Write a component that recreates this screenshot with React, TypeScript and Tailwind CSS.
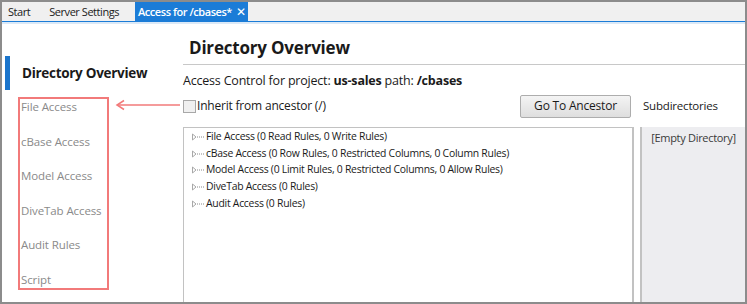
import React from "react";

const treeRows = [
  "File Access (0 Read Rules, 0 Write Rules)",
  "cBase Access (0 Row Rules, 0 Restricted Columns, 0 Column Rules)",
  "Model Access (0 Limit Rules, 0 Restricted Columns, 0 Allow Rules)",
  "DiveTab Access (0 Rules)",
  "Audit Access (0 Rules)",
];

const sideItems = ["File Access", "cBase Access", "Model Access", "DiveTab Access", "Audit Rules", "Script"];

function Expander() {
  return (
    <svg width="14" height="8" viewBox="0 0 14 8" className="shrink-0">
      <path d="M1.5 1 L5 4 L1.5 7 Z" fill="none" stroke="#a8a8a8" strokeWidth="1" />
      <path d="M6 4 H13" stroke="#8a8a8a" strokeWidth="1" strokeDasharray="1 1" />
    </svg>
  );
}

export default function App() {
  return (
    <div
      className="relative flex h-[304px] w-[747px] flex-col overflow-hidden border-2 border-[#8c8c8c] bg-white text-[#1a1a1a]"
      style={{ fontFamily: '"Open Sans", "Noto Sans", sans-serif' }}
    >
      {/* tabs */}
      <div className="flex h-[19px] shrink-0 items-end whitespace-nowrap bg-[#f0f0f0] text-[11px] leading-none tracking-[-0.45px]">
        <div className="flex h-full items-center pl-[6px]">Start</div>
        <div className="flex h-full items-center pl-[19px]">Server Settings</div>
        <div className="ml-[16px] flex h-full shrink-0 items-center gap-[4px] bg-[#1b7cd7] pl-[3px] pr-[2px] font-semibold text-white">
          <span>Access for /cbases*</span>
          <span className="text-[12px] font-normal">✕</span>
        </div>
      </div>
      <div className="h-[1px] shrink-0 bg-[#1b7cd7]" />
      <div className="h-[2px] shrink-0 bg-[#dbe9f7]" />

      <div className="flex min-h-0 flex-1">
        {/* sidebar */}
        <div className="w-[181px] shrink-0 pt-[32px]">
          <div className="flex h-[34px] items-center">
            <div className="ml-[3px] h-full w-[5px] bg-[#1b75cc]" />
            <span className="ml-[12px] text-[13.5px] font-bold tracking-[-0.3px]">Directory Overview</span>
          </div>
          <div className="ml-[16px] mt-[7px] flex w-[91px] flex-col gap-[18.6px] border-2 border-[#f27a7a]">
            {sideItems.map((item) => (
              <div key={item} className="h-[16px] pl-[1px] text-[11.5px] leading-[16px] tracking-[-0.1px] text-[#8a8a8a]">
                {item}
              </div>
            ))}
          </div>
        </div>

        {/* main */}
        <div className="flex min-w-0 flex-1 flex-col">
          <div className="flex h-[41px] shrink-0 items-end border-b border-[#c8c8c8] pb-[8px] pl-[6px] text-[17px] font-bold leading-none tracking-[-0.2px]">
            Directory Overview
          </div>
          <div className="mt-[10px] text-[12.5px] leading-none tracking-[-0.2px]">
            Access Control for project: <span className="font-bold">us-sales</span> path: <span className="font-bold">/cbases</span>
          </div>
          <div className="mt-[7px] flex h-[23px] items-center text-[12px] tracking-[-0.2px]">
            <div className="h-[13px] w-[13px] border border-[#a8a8a8] bg-[#f0f0f0]" />
            <span className="ml-[1px]">Inherit from ancestor (/)</span>
            <button className="ml-auto h-[23px] w-[111px] rounded-[2px] border border-[#adadad] bg-gradient-to-b from-[#f4f4f4] to-[#dedede] text-[12px]">
              Go To Ancestor
            </button>
            <span className="ml-[12px] w-[102px] text-[11.5px]">Subdirectories</span>
          </div>
          <div className="mt-[9px] flex min-h-0 flex-1">
            <div className="flex flex-1 flex-col border border-r-2 border-b-0 border-[#c2c2c2] pl-[7px] pt-[1px]">
              {treeRows.map((row) => (
                <div key={row} className="flex h-[16.7px] items-center gap-[1px] text-[10.4px] tracking-[-0.25px]">
                  <Expander />
                  <span>{row}</span>
                </div>
              ))}
            </div>
            <div className="ml-[6px] w-[105px] border-l-2 border-[#c2c2c2] bg-[#ededf0] pt-[3px] text-center text-[11px] tracking-[-0.3px] text-[#3a3a3a]">
              [Empty Directory]
            </div>
          </div>
        </div>
      </div>

      {/* annotation arrow */}
      <svg className="absolute left-[112px] top-[97px]" width="68" height="12" viewBox="0 0 68 12">
        <path d="M4 6 H66" stroke="#f27a7a" strokeWidth="1.5" />
        <path d="M10 1.5 L3 6 L10 10.5" fill="none" stroke="#f27a7a" strokeWidth="1.5" />
      </svg>
    </div>
  );
}
